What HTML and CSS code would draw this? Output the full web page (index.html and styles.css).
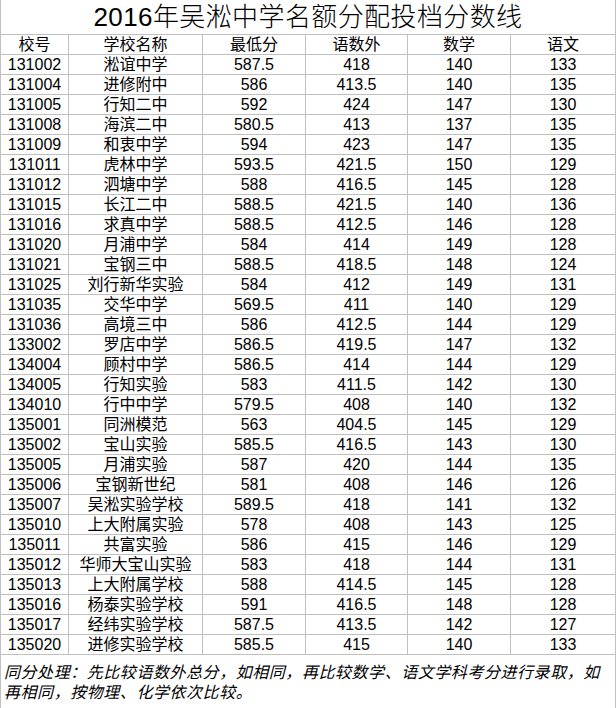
FILE: index.html
```html
<!DOCTYPE html>
<html lang="zh">
<head>
<meta charset="utf-8">
<title>2016年吴淞中学名额分配投档分数线</title>
<link rel="stylesheet" href="styles.css">
</head>
<body>
<table class="sheet">
<colgroup>
<col class="c1"><col class="c2"><col class="c3"><col class="c4"><col class="c5"><col class="c6">
</colgroup>
<thead>
<tr class="title-row"><th colspan="6">2016年吴淞中学名额分配投档分数线</th></tr>
<tr class="head-row"><th>校号</th><th>学校名称</th><th>最低分</th><th>语数外</th><th>数学</th><th>语文</th></tr>
</thead>
<tbody>
<tr><td>131002</td><td>淞谊中学</td><td>587.5</td><td>418</td><td>140</td><td>133</td></tr>
<tr><td>131004</td><td>进修附中</td><td>586</td><td>413.5</td><td>140</td><td>135</td></tr>
<tr><td>131005</td><td>行知二中</td><td>592</td><td>424</td><td>147</td><td>130</td></tr>
<tr><td>131008</td><td>海滨二中</td><td>580.5</td><td>413</td><td>137</td><td>135</td></tr>
<tr><td>131009</td><td>和衷中学</td><td>594</td><td>423</td><td>147</td><td>135</td></tr>
<tr><td>131011</td><td>虎林中学</td><td>593.5</td><td>421.5</td><td>150</td><td>129</td></tr>
<tr><td>131012</td><td>泗塘中学</td><td>588</td><td>416.5</td><td>145</td><td>128</td></tr>
<tr><td>131015</td><td>长江二中</td><td>588.5</td><td>421.5</td><td>140</td><td>136</td></tr>
<tr><td>131016</td><td>求真中学</td><td>588.5</td><td>412.5</td><td>146</td><td>128</td></tr>
<tr><td>131020</td><td>月浦中学</td><td>584</td><td>414</td><td>149</td><td>128</td></tr>
<tr><td>131021</td><td>宝钢三中</td><td>588.5</td><td>418.5</td><td>148</td><td>124</td></tr>
<tr><td>131025</td><td>刘行新华实验</td><td>584</td><td>412</td><td>149</td><td>131</td></tr>
<tr><td>131035</td><td>交华中学</td><td>569.5</td><td>411</td><td>140</td><td>129</td></tr>
<tr><td>131036</td><td>高境三中</td><td>586</td><td>412.5</td><td>144</td><td>129</td></tr>
<tr><td>133002</td><td>罗店中学</td><td>586.5</td><td>419.5</td><td>147</td><td>132</td></tr>
<tr><td>134004</td><td>顾村中学</td><td>586.5</td><td>414</td><td>144</td><td>129</td></tr>
<tr><td>134005</td><td>行知实验</td><td>583</td><td>411.5</td><td>142</td><td>130</td></tr>
<tr><td>134010</td><td>行中中学</td><td>579.5</td><td>408</td><td>140</td><td>132</td></tr>
<tr><td>135001</td><td>同洲模范</td><td>563</td><td>404.5</td><td>145</td><td>129</td></tr>
<tr><td>135002</td><td>宝山实验</td><td>585.5</td><td>416.5</td><td>143</td><td>130</td></tr>
<tr><td>135005</td><td>月浦实验</td><td>587</td><td>420</td><td>144</td><td>135</td></tr>
<tr><td>135006</td><td>宝钢新世纪</td><td>581</td><td>408</td><td>146</td><td>126</td></tr>
<tr><td>135007</td><td>吴淞实验学校</td><td>589.5</td><td>418</td><td>141</td><td>132</td></tr>
<tr><td>135010</td><td>上大附属实验</td><td>578</td><td>408</td><td>143</td><td>125</td></tr>
<tr><td>135011</td><td>共富实验</td><td>586</td><td>415</td><td>146</td><td>129</td></tr>
<tr><td>135012</td><td>华师大宝山实验</td><td>583</td><td>418</td><td>144</td><td>131</td></tr>
<tr><td>135013</td><td>上大附属学校</td><td>588</td><td>414.5</td><td>145</td><td>128</td></tr>
<tr><td>135016</td><td>杨泰实验学校</td><td>591</td><td>416.5</td><td>148</td><td>128</td></tr>
<tr><td>135017</td><td>经纬实验学校</td><td>587.5</td><td>413.5</td><td>142</td><td>127</td></tr>
<tr><td>135020</td><td>进修实验学校</td><td>585.5</td><td>415</td><td>140</td><td>133</td></tr>
</tbody>
<tfoot>
<tr class="note-row"><td colspan="6">同分处理：先比较语数外总分，如相同，再比较数学、语文学科考分进行录取，如<br>再相同，按物理、化学依次比较。</td></tr>
</tfoot>
</table>
</body>
</html>
```

FILE: styles.css
```css
html, body {
  margin: 0;
  padding: 0;
  background: #ffffff;
}

.sheet {
  border-collapse: collapse;
  table-layout: fixed;
  width: 615px;
  font-family: "Liberation Sans", "Noto Sans CJK SC", sans-serif;
  color: #000000;
}

.c1 { width: 68px; }
.c2 { width: 134px; }
.c3 { width: 103px; }
.c4 { width: 102px; }
.c5 { width: 103px; }
.c6 { width: 105px; }

.sheet th,
.sheet td {
  border: 1px solid #c0c0c0;
  padding: 0;
  text-align: center;
  font-weight: normal;
  font-size: 16px;
  height: 19px;
  line-height: 19px;
  white-space: nowrap;
  overflow: hidden;
}

.title-row th {
  font-size: 26px;
  font-weight: 300;
  letter-spacing: 0.4px;
  height: 34px;
  line-height: 34px;
  border-top: none;
}

.note-row td {
  text-align: left;
  font-style: italic;
  font-size: 16px;
  letter-spacing: 0.55px;
  height: 47px;
  line-height: 20px;
  padding: 8px 0 0 3px;
  vertical-align: top;
  white-space: normal;
}
```
